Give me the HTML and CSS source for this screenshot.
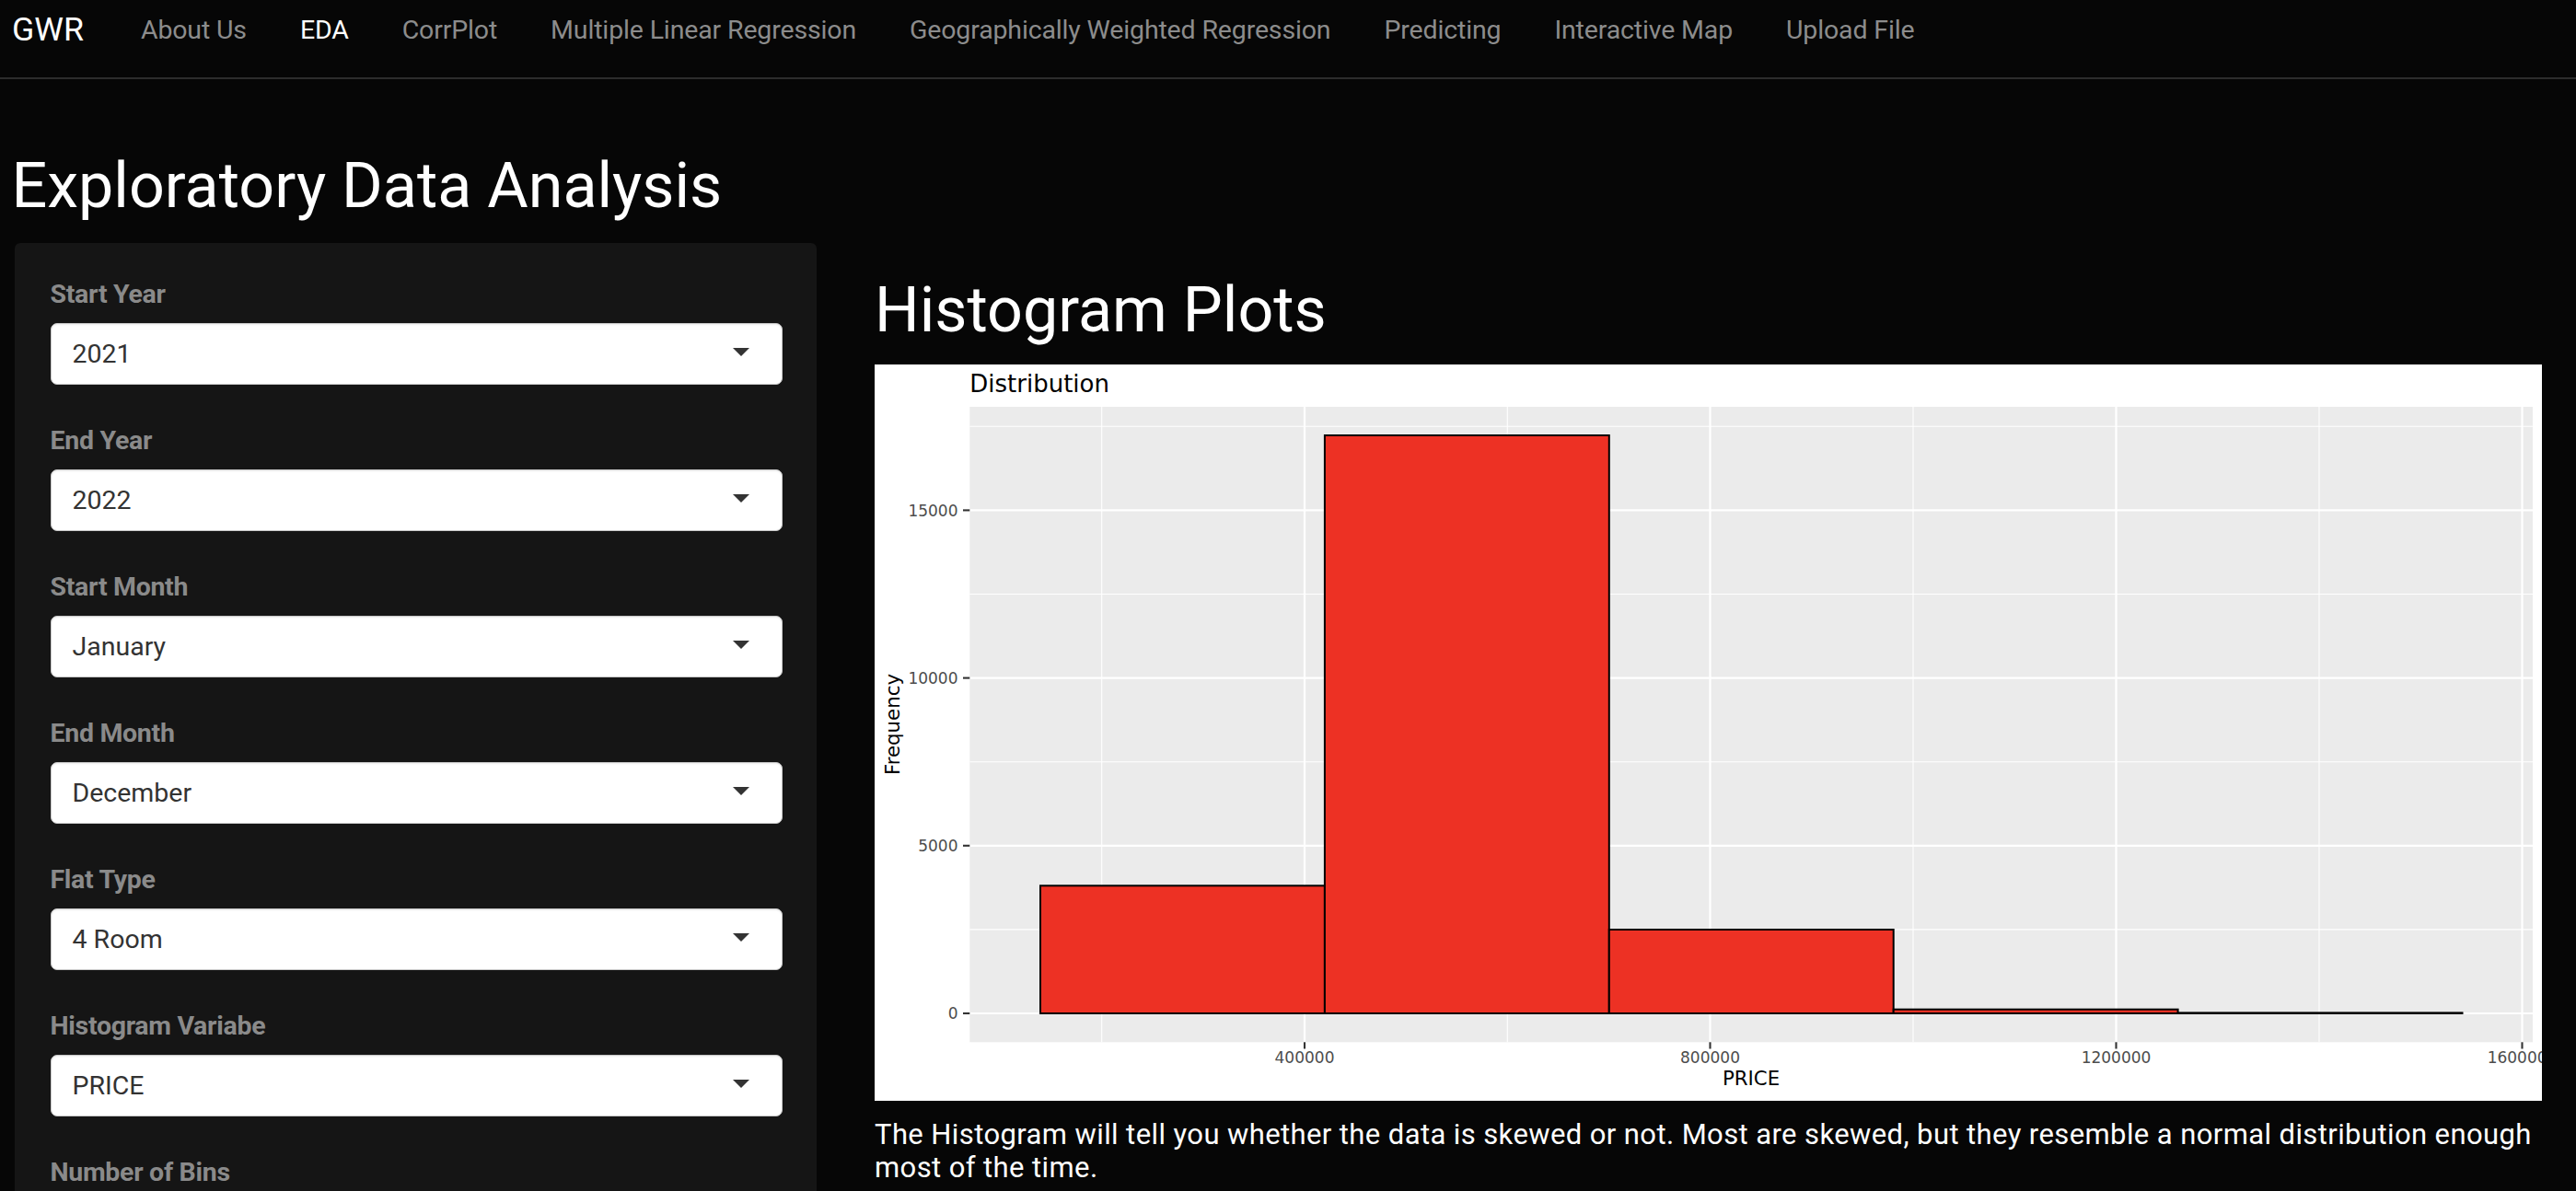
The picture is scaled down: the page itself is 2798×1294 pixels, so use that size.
FILE: index.html
```html
<!DOCTYPE html>
<html lang="en">
<head>
<meta charset="utf-8">
<title>GWR - EDA</title>
<link rel="stylesheet" href="styles.css">
</head>
<body>
<nav class="navbar">
  <a class="brand" href="#">GWR</a>
  <ul class="nav">
    <li><a class="nav-link" href="#">About Us</a></li>
    <li><a class="nav-link active" href="#">EDA</a></li>
    <li><a class="nav-link" href="#">CorrPlot</a></li>
    <li><a class="nav-link" href="#">Multiple Linear Regression</a></li>
    <li><a class="nav-link" href="#">Geographically Weighted Regression</a></li>
    <li><a class="nav-link" href="#">Predicting</a></li>
    <li><a class="nav-link" href="#">Interactive Map</a></li>
    <li><a class="nav-link" href="#">Upload File</a></li>
  </ul>
</nav>
<div class="page">
  <h2 class="page-title">Exploratory Data Analysis</h2>
  <div class="layout">
    <aside class="sidebar">
      <div class="form-group">
        <label class="control-label">Start Year</label>
        <div class="select"><span>2021</span><span class="caret"></span></div>
      </div>
      <div class="form-group">
        <label class="control-label">End Year</label>
        <div class="select"><span>2022</span><span class="caret"></span></div>
      </div>
      <div class="form-group">
        <label class="control-label">Start Month</label>
        <div class="select"><span>January</span><span class="caret"></span></div>
      </div>
      <div class="form-group">
        <label class="control-label">End Month</label>
        <div class="select"><span>December</span><span class="caret"></span></div>
      </div>
      <div class="form-group">
        <label class="control-label">Flat Type</label>
        <div class="select"><span>4 Room</span><span class="caret"></span></div>
      </div>
      <div class="form-group">
        <label class="control-label">Histogram Variabe</label>
        <div class="select"><span>PRICE</span><span class="caret"></span></div>
      </div>
      <div class="form-group">
        <label class="control-label">Number of Bins</label>
        <div class="slider"><div class="slider-track"></div></div>
      </div>
    </aside>
    <main class="main">
      <h2 class="section-title">Histogram Plots</h2>
      <svg class="plot" width="1811" height="800" viewBox="0 0 1811 800">
        <rect x="0" y="0" width="1811" height="800" fill="#ffffff"/>
        <text x="103.3" y="30" font-family="DejaVu Sans" font-size="26" fill="#000">Distribution</text>
        <rect x="103.3" y="46" width="1697.7" height="690.3" fill="#EBEBEB"/>
        <g stroke="#ffffff" stroke-width="1.1">
          <line x1="246.7" y1="46" x2="246.7" y2="736.3"/>
          <line x1="687.3" y1="46" x2="687.3" y2="736.3"/>
          <line x1="1128" y1="46" x2="1128" y2="736.3"/>
          <line x1="1569" y1="46" x2="1569" y2="736.3"/>
          <line x1="103.3" y1="613.9" x2="1801" y2="613.9"/>
          <line x1="103.3" y1="431.7" x2="1801" y2="431.7"/>
          <line x1="103.3" y1="249.5" x2="1801" y2="249.5"/>
          <line x1="103.3" y1="67.3" x2="1801" y2="67.3"/>
        </g>
        <g stroke="#ffffff" stroke-width="2.2">
          <line x1="467" y1="46" x2="467" y2="736.3"/>
          <line x1="907.5" y1="46" x2="907.5" y2="736.3"/>
          <line x1="1348.5" y1="46" x2="1348.5" y2="736.3"/>
          <line x1="1789.5" y1="46" x2="1789.5" y2="736.3"/>
          <line x1="103.3" y1="705" x2="1801" y2="705"/>
          <line x1="103.3" y1="522.8" x2="1801" y2="522.8"/>
          <line x1="103.3" y1="340.6" x2="1801" y2="340.6"/>
          <line x1="103.3" y1="158.4" x2="1801" y2="158.4"/>
        </g>
        <g fill="#ED3124" stroke="#000" stroke-width="2">
          <rect x="180" y="566.3" width="308.9" height="138.7"/>
          <rect x="488.9" y="77" width="308.9" height="628"/>
          <rect x="797.8" y="614" width="308.9" height="91"/>
          <rect x="1106.7" y="700.7" width="308.9" height="4.3"/>
          <rect x="1415.6" y="704.4" width="308.9" height="0.6"/>
        </g>
        <g stroke="#333333" stroke-width="2.1">
          <line x1="96" y1="705" x2="103.3" y2="705"/>
          <line x1="96" y1="522.8" x2="103.3" y2="522.8"/>
          <line x1="96" y1="340.6" x2="103.3" y2="340.6"/>
          <line x1="96" y1="158.4" x2="103.3" y2="158.4"/>
          <line x1="467" y1="736.3" x2="467" y2="743.5"/>
          <line x1="907.5" y1="736.3" x2="907.5" y2="743.5"/>
          <line x1="1348.5" y1="736.3" x2="1348.5" y2="743.5"/>
          <line x1="1789.5" y1="736.3" x2="1789.5" y2="743.5"/>
        </g>
        <g font-family="DejaVu Sans" font-size="17" fill="#4D4D4D" text-anchor="end">
          <text x="90.5" y="711.2">0</text>
          <text x="90.5" y="529">5000</text>
          <text x="90.5" y="346.8">10000</text>
          <text x="90.5" y="164.6">15000</text>
        </g>
        <g font-family="DejaVu Sans" font-size="17" fill="#4D4D4D" text-anchor="middle">
          <text x="467" y="759.3">400000</text>
          <text x="907.5" y="759.3">800000</text>
          <text x="1348.5" y="759.3">1200000</text>
          <text x="1789.5" y="759.3">1600000</text>
        </g>
        <text x="952" y="783" font-family="DejaVu Sans" font-size="21.3" fill="#000" text-anchor="middle">PRICE</text>
        <text transform="translate(27 391) rotate(-90)" font-family="DejaVu Sans" font-size="21.3" fill="#000" text-anchor="middle">Frequency</text>
      </svg>
      <p class="note">The Histogram will tell you whether the data is skewed or not. Most are skewed, but they resemble a normal distribution enough most of the time.</p>
    </main>
  </div>
</div>
</body>
</html>
```
FILE: styles.css
```css
html, body {
  margin: 0;
  padding: 0;
  background: #060606;
  overflow: hidden;
}

body {
  font-family: Roboto, "Liberation Sans", sans-serif;
  color: #ffffff;
  width: 2798px;
  height: 1294px;
}

.navbar {
  display: flex;
  align-items: flex-start;
  height: 84px;
  padding-left: 13px;
  border-bottom: 2px solid #2c2c2c;
}

.brand {
  font-size: 35.7px;
  line-height: 53.5px;
  margin-top: 6px;
  margin-right: 62px;
  color: #ffffff;
  text-decoration: none;
}

.nav {
  display: flex;
  gap: 58px;
  list-style: none;
  margin: 12px 0 0;
  padding: 0;
}

.nav-link {
  font-size: 28.5px;
  line-height: 42.75px;
  letter-spacing: -0.15px;
  color: #8c8c8c;
  text-decoration: none;
}

.nav-link.active {
  color: #ffffff;
}

.page-title {
  font-size: 68.2px;
  font-weight: 400;
  line-height: 81px;
  margin: 76.4px 0 20.6px 12.5px;
}

.layout {
  display: flex;
  align-items: flex-start;
  gap: 63px;
  padding-left: 16px;
}

.sidebar {
  width: 871px;
  box-sizing: border-box;
  flex: none;
  background: #151515;
  border-radius: 6px;
  padding: 35px 37.5px 60px 38.5px;
}

.form-group {
  margin-bottom: 40px;
}

.control-label {
  display: block;
  font-size: 28.5px;
  line-height: 42px;
  font-weight: 700;
  letter-spacing: -0.3px;
  color: #8a8a8a;
  margin-bottom: 10px;
}

.select {
  height: 67px;
  box-sizing: border-box;
  display: flex;
  align-items: center;
  justify-content: space-between;
  padding: 0 35px 0 23px;
  background: #ffffff;
  border: 1px solid #c9c9c9;
  border-radius: 7px;
  box-shadow: inset 0 1px 2px rgba(0, 0, 0, 0.08);
  font-size: 28.5px;
  color: #333333;
}

.caret {
  width: 0;
  height: 0;
  border-left: 9px solid transparent;
  border-right: 9px solid transparent;
  border-top: 9px solid #333333;
  margin-bottom: 3px;
}

.slider {
  height: 80px;
  display: flex;
  align-items: center;
}

.slider-track {
  width: 100%;
  height: 10px;
  border-radius: 5px;
  background: #444444;
}

.main {
  width: 1811px;
  flex: none;
  padding-top: 33px;
}

.section-title {
  font-size: 68.2px;
  font-weight: 400;
  line-height: 81px;
  margin: 0 0 18px;
}

.plot {
  display: block;
}

.note {
  font-size: 31px;
  letter-spacing: 0.4px;
  line-height: 35.7px;
  margin: 19px 0 0;
}
```
